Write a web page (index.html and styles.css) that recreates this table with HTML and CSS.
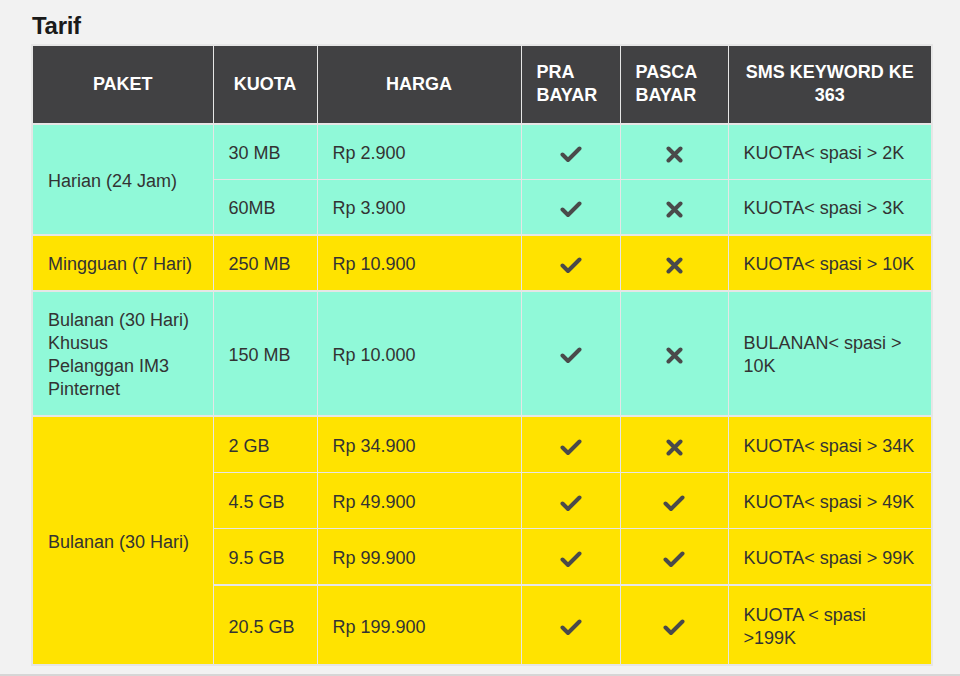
FILE: index.html
```html
<!DOCTYPE html>
<html lang="id">
<head>
<meta charset="utf-8">
<title>Tarif</title>
<link rel="stylesheet" href="styles.css">
</head>
<body>
<div class="page">
  <h2 class="title">Tarif</h2>
  <table class="tarif">
    <colgroup>
      <col class="c-paket"><col class="c-kuota"><col class="c-harga"><col class="c-pra"><col class="c-pasca"><col class="c-sms">
    </colgroup>
    <thead>
      <tr>
        <th>PAKET</th>
        <th>KUOTA</th>
        <th>HARGA</th>
        <th class="left">PRA BAYAR</th>
        <th class="left">PASCA BAYAR</th>
        <th>SMS KEYWORD KE 363</th>
      </tr>
    </thead>
    <tbody>
      <tr class="mint group">
        <td rowspan="2">Harian (24 Jam)</td>
        <td>30 MB</td>
        <td>Rp 2.900</td>
        <td class="icon"><svg class="ic-check" viewBox="0 0 22 17"><polyline points="2.5,8.5 8,14 19.5,2.5"/></svg></td>
        <td class="icon"><svg class="ic-cross" viewBox="0 0 17 17"><path d="M2.5 2.5L14.5 14.5M14.5 2.5L2.5 14.5"/></svg></td>
        <td class="sms">KUOTA&lt; spasi &gt; 2K</td>
      </tr>
      <tr class="mint">
        <td>60MB</td>
        <td>Rp 3.900</td>
        <td class="icon"><svg class="ic-check" viewBox="0 0 22 17"><polyline points="2.5,8.5 8,14 19.5,2.5"/></svg></td>
        <td class="icon"><svg class="ic-cross" viewBox="0 0 17 17"><path d="M2.5 2.5L14.5 14.5M14.5 2.5L2.5 14.5"/></svg></td>
        <td class="sms">KUOTA&lt; spasi &gt; 3K</td>
      </tr>
      <tr class="yellow group">
        <td>Mingguan (7 Hari)</td>
        <td>250 MB</td>
        <td>Rp 10.900</td>
        <td class="icon"><svg class="ic-check" viewBox="0 0 22 17"><polyline points="2.5,8.5 8,14 19.5,2.5"/></svg></td>
        <td class="icon"><svg class="ic-cross" viewBox="0 0 17 17"><path d="M2.5 2.5L14.5 14.5M14.5 2.5L2.5 14.5"/></svg></td>
        <td class="sms">KUOTA&lt; spasi &gt; 10K</td>
      </tr>
      <tr class="mint group">
        <td>Bulanan (30 Hari)<br>Khusus<br>Pelanggan IM3<br>Pinternet</td>
        <td>150 MB</td>
        <td>Rp 10.000</td>
        <td class="icon"><svg class="ic-check" viewBox="0 0 22 17"><polyline points="2.5,8.5 8,14 19.5,2.5"/></svg></td>
        <td class="icon"><svg class="ic-cross" viewBox="0 0 17 17"><path d="M2.5 2.5L14.5 14.5M14.5 2.5L2.5 14.5"/></svg></td>
        <td class="sms">BULANAN&lt; spasi &gt;<br>10K</td>
      </tr>
      <tr class="yellow group tall">
        <td rowspan="4">Bulanan (30 Hari)</td>
        <td>2 GB</td>
        <td>Rp 34.900</td>
        <td class="icon"><svg class="ic-check" viewBox="0 0 22 17"><polyline points="2.5,8.5 8,14 19.5,2.5"/></svg></td>
        <td class="icon"><svg class="ic-cross" viewBox="0 0 17 17"><path d="M2.5 2.5L14.5 14.5M14.5 2.5L2.5 14.5"/></svg></td>
        <td class="sms">KUOTA&lt; spasi &gt; 34K</td>
      </tr>
      <tr class="yellow tall">
        <td>4.5 GB</td>
        <td>Rp 49.900</td>
        <td class="icon"><svg class="ic-check" viewBox="0 0 22 17"><polyline points="2.5,8.5 8,14 19.5,2.5"/></svg></td>
        <td class="icon"><svg class="ic-check" viewBox="0 0 22 17"><polyline points="2.5,8.5 8,14 19.5,2.5"/></svg></td>
        <td class="sms">KUOTA&lt; spasi &gt; 49K</td>
      </tr>
      <tr class="yellow tall">
        <td>9.5 GB</td>
        <td>Rp 99.900</td>
        <td class="icon"><svg class="ic-check" viewBox="0 0 22 17"><polyline points="2.5,8.5 8,14 19.5,2.5"/></svg></td>
        <td class="icon"><svg class="ic-check" viewBox="0 0 22 17"><polyline points="2.5,8.5 8,14 19.5,2.5"/></svg></td>
        <td class="sms">KUOTA&lt; spasi &gt; 99K</td>
      </tr>
      <tr class="yellow thick tall">
        <td>20.5 GB</td>
        <td>Rp 199.900</td>
        <td class="icon"><svg class="ic-check" viewBox="0 0 22 17"><polyline points="2.5,8.5 8,14 19.5,2.5"/></svg></td>
        <td class="icon"><svg class="ic-check" viewBox="0 0 22 17"><polyline points="2.5,8.5 8,14 19.5,2.5"/></svg></td>
        <td class="sms">KUOTA &lt; spasi<br>&gt;199K</td>
      </tr>
    </tbody>
  </table>
</div>
</body>
</html>
```

FILE: styles.css
```css
html, body {
  margin: 0;
  padding: 0;
  background: #f2f2f2;
}

.page {
  box-sizing: border-box;
  height: 676px;
  padding: 12px 29px 0 31px;
  border-bottom: 2px solid #d6d6d6;
  font-family: "Liberation Sans", Arial, sans-serif;
  color: #333333;
}

.title {
  margin: 0 0 4px 1px;
  font-size: 24px;
  line-height: 28px;
  font-weight: bold;
  letter-spacing: -0.3px;
  color: #1a1a1a;
}

.tarif {
  width: 900px;
  table-layout: fixed;
  border-collapse: collapse;
  border: 2px solid #e6e6e6;
  font-size: 18px;
  line-height: 23px;
}

.c-paket { width: 181px; }
.c-kuota { width: 104px; }
.c-harga { width: 204px; }
.c-pra { width: 99px; }
.c-pasca { width: 108px; }
.c-sms { width: 204px; }

.tarif th,
.tarif td {
  border: 1px solid #e6e6e6;
  padding: 17px 15px 14px 15px;
  vertical-align: middle;
  text-align: left;
}

.tarif th {
  background: #414143;
  color: #ffffff;
  font-weight: bold;
  text-align: center;
  border-bottom-width: 2px;
  padding: 15px 14px 16px 14px;
}

.tarif th.left {
  text-align: left;
  padding-left: 15px;
}

.tarif td.sms {
  padding-right: 6px;
}

.tarif tr.group td,
.tarif tr.thick td {
  border-top-width: 2px;
}

.tarif tr.tall td {
  padding-top: 18px;
  padding-bottom: 14px;
}

.tarif tr.mint td {
  background: #90f9d8;
}

.tarif tr.yellow td {
  background: #ffe300;
}

.tarif td.icon {
  text-align: center;
  padding-left: 0;
  padding-right: 0;
}

.ic-check,
.ic-cross {
  display: inline-block;
  vertical-align: middle;
  fill: none;
  stroke: #4a4a4a;
  stroke-width: 4;
  stroke-linecap: round;
  stroke-linejoin: round;
}

.ic-check {
  width: 22px;
  height: 17px;
}

.ic-cross {
  width: 17px;
  height: 17px;
}
```
